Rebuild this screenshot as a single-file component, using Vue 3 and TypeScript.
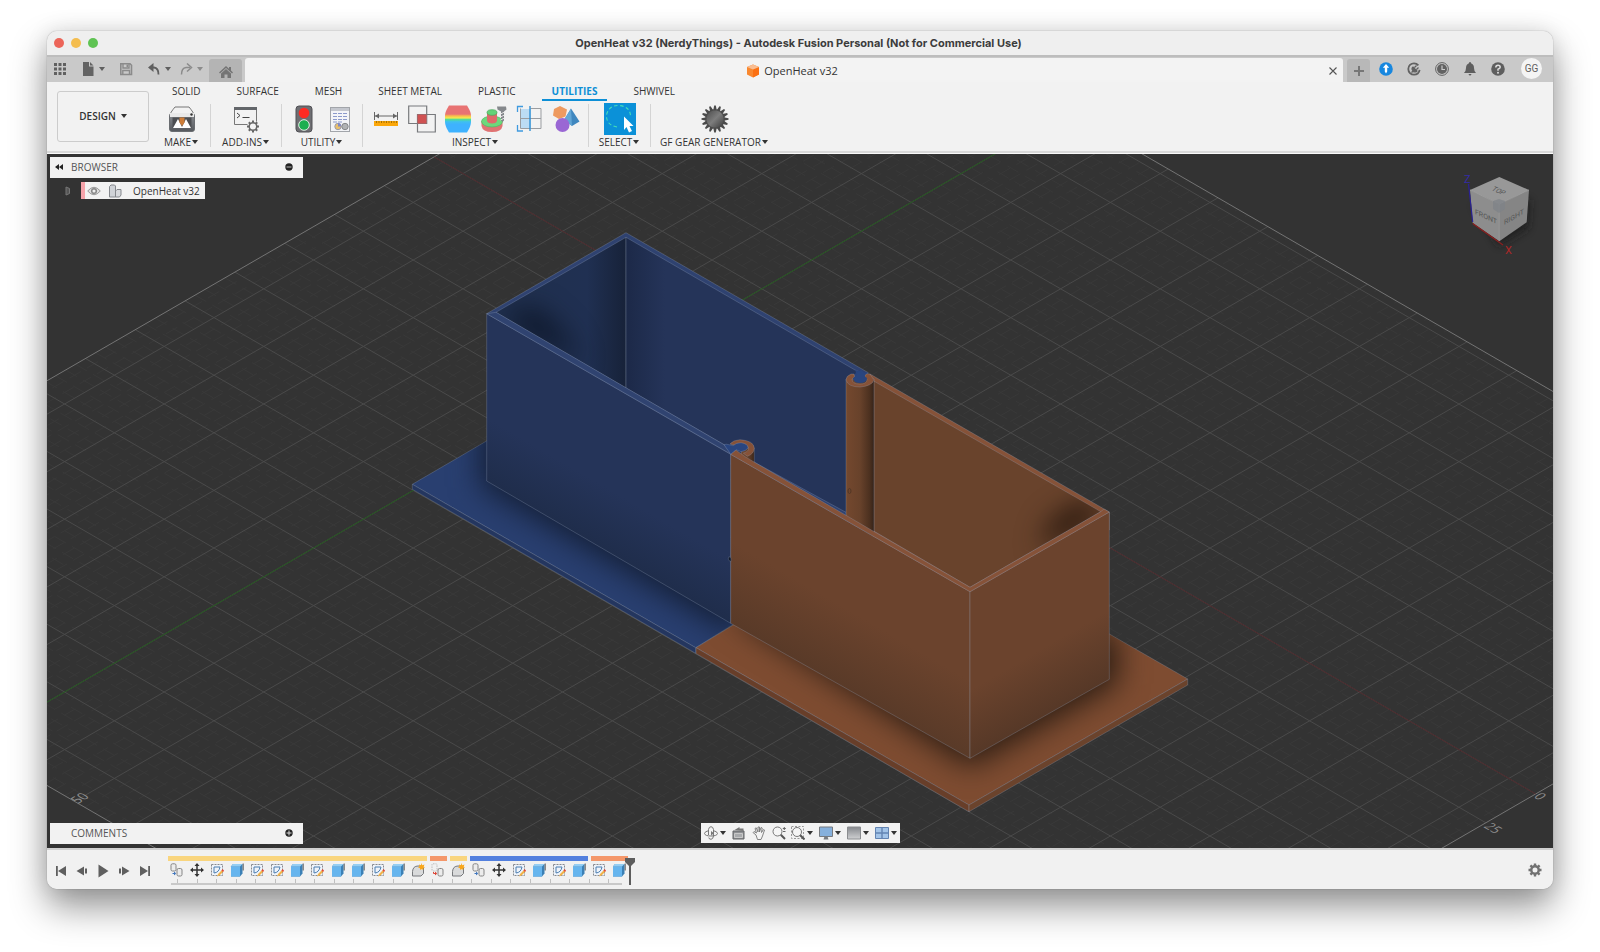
<script setup lang="ts">
import { ref } from 'vue'

interface ToolGroup {
  label: string
  size: string
  icons: { id: string; name: string; active?: boolean }[]
}

const tabs = ['SOLID', 'SURFACE', 'MESH', 'SHEET METAL', 'PLASTIC', 'UTILITIES', 'SHWIVEL']
const activeTab = ref('UTILITIES')

const groups: ToolGroup[] = [
  { label: 'MAKE', size: 'g-make', icons: [{ id: 'i-make', name: '3D print' }] },
  { label: 'ADD-INS', size: 'g-addins', icons: [{ id: 'i-script', name: 'Scripts and add-ins' }] },
  {
    label: 'UTILITY',
    size: 'g-utility',
    icons: [
      { id: 'i-traffic', name: 'Compute all' },
      { id: 'i-sheet', name: 'Parameters' },
    ],
  },
  {
    label: 'INSPECT',
    size: 'g-inspect',
    icons: [
      { id: 'i-measure', name: 'Measure' },
      { id: 'i-interfere', name: 'Interference' },
      { id: 'i-zebra', name: 'Curvature' },
      { id: 'i-section', name: 'Draft analysis' },
      { id: 'i-plane', name: 'Section analysis' },
      { id: 'i-shapes', name: 'Component colors' },
    ],
  },
  { label: 'SELECT', size: 'g-select', icons: [{ id: 'i-select', name: 'Select', active: true }] },
  { label: 'GF GEAR GENERATOR', size: 'g-gear', icons: [{ id: 'i-gear', name: 'Gear generator' }] },
]

const spans = [
  { cls: 'yellow s13' },
  { cls: 'orange s1' },
  { cls: 'yellow s1' },
  { cls: 'blue s6' },
  { cls: 'orange s2' },
]

const history = [
  'joint', 'move', 'sketch', 'extrude', 'sketch', 'sketch', 'extrude', 'sketch', 'extrude', 'extrude',
  'sketch', 'extrude', 'fillet', 'jointr', 'fillet', 'joint', 'move', 'sketch', 'extrude', 'sketch',
  'extrude', 'sketch', 'extrude',
]

const playback = [
  { id: 't-first', name: 'Go to beginning' },
  { id: 't-back', name: 'Step back' },
  { id: 't-play', name: 'Play' },
  { id: 't-fwd', name: 'Step forward' },
  { id: 't-last', name: 'Go to end' },
]

const navTools = [
  { id: 'n-orbit', name: 'Orbit', caret: true },
  { id: 'n-look', name: 'Look at', caret: false },
  { id: 'n-pan', name: 'Pan', caret: false },
  { id: 'n-zoom', name: 'Zoom', caret: false },
  { id: 'n-fit', name: 'Fit', caret: true },
  { id: 'n-display', name: 'Display settings', caret: true },
  { id: 'n-grid', name: 'Grid and snaps', caret: true },
  { id: 'n-views', name: 'Viewports', caret: true },
]

const origin = { x: 712, y: 317.6 }
const step = { x: 49.8, y: 28.8 }
const span = { i0: -5.58, i1: 16.54, j0: -14.8, j1: 7.16 }

const at = (i: number, j: number): string =>
  `${(origin.x + (i + j) * step.x).toFixed(1)} ${(origin.y + (i - j) * step.y).toFixed(1)}`

function gridPath(div: number): string {
  let d = ''
  for (let n = Math.ceil(span.i0 * div); n <= span.i1 * div; n++) {
    if (div > 1 && n % div === 0) continue
    d += `M${at(n / div, span.j0)}L${at(n / div, span.j1)}`
  }
  for (let n = Math.ceil(span.j0 * div); n <= span.j1 * div; n++) {
    if (div > 1 && n % div === 0) continue
    d += `M${at(span.i0, n / div)}L${at(span.i1, n / div)}`
  }
  return d
}

const majorGrid = gridPath(1)
const minorGrid = gridPath(5)
const border = `M${at(span.i0, span.j0)}L${at(span.i0, span.j1)}L${at(span.i1, span.j1)}L${at(span.i1, span.j0)}Z`
const xAxis = `M${at(span.i0, 0)}L${at(span.i1, 0)}`
const yAxis = `M${at(0, span.j0)}L${at(0, span.j1)}`

const teeth = Array.from({ length: 16 }, (_, k) => k * 22.5)
const cogTeeth = Array.from({ length: 8 }, (_, k) => k * 45)
</script>

<template>
  <div class="desktop">
    <svg class="sprites" aria-hidden="true">
      <defs>
        <linearGradient id="gPrinter" x1="0" y1="0" x2="0" y2="1"><stop offset="0" stop-color="#8b8e93" /><stop offset="1" stop-color="#55585d" /></linearGradient>
        <linearGradient id="gHeat" x1="0" y1="0" x2="0" y2="1">
          <stop offset=".32" stop-color="#e87373" /><stop offset=".38" stop-color="#f8b84e" /><stop offset=".46" stop-color="#f5ea4c" />
          <stop offset=".52" stop-color="#4fdc9b" /><stop offset=".6" stop-color="#3fc0f0" /><stop offset=".7" stop-color="#3eb2ff" />
        </linearGradient>
        <linearGradient id="gGear" x1="0" y1="0" x2="1" y2="1"><stop offset="0" stop-color="#444" /><stop offset=".5" stop-color="#7d7d7d" /><stop offset="1" stop-color="#333" /></linearGradient>
        <linearGradient id="gGrey" x1="0" y1="0" x2="0" y2="1"><stop offset="0" stop-color="#85888d" /><stop offset="1" stop-color="#cfd0d2" /></linearGradient>
        <symbol id="i-make" viewBox="0 0 28 28">
          <path d="M2 10Q2 8 7 2h14q5 6 5 8z" fill="#f2f2f2" stroke="#777" />
          <rect x="1.500" y="8.500" width="25" height="18" rx="2.500" fill="url(#gPrinter)" stroke="#6a6d71" />
          <path d="M2 8h24v4H2z" fill="#e9e9e9" /><circle cx="23.500" cy="9.500" r="1.200" fill="#333" />
          <rect x="4.500" y="12.500" width="19" height="10.500" fill="#4c4e52" />
          <path d="M5 23 10 14l4 8 4-8 5 9z" fill="#fff" /><path d="M11.500 12.500h5v5L14 21l-2.500-3.500z" fill="#ce7d38" />
        </symbol>
        <symbol id="i-script" viewBox="0 0 28 28">
          <path d="M2.500 2.500h22v14M2.500 2.500v17h13" fill="none" stroke="#777" /><path d="M2 2h23v3H2z" fill="#63666a" />
          <path d="m5 8 3 2.500-3 2.500M10.500 12.500h7" fill="none" stroke="#444" />
          <circle cx="21" cy="21.500" r="3.800" fill="#f4f4f4" stroke="#666" stroke-width="1.500" />
          <path d="M21 17.500v-2M21 27.500v-2M25 21.500h2M15 21.500h2M18.200 18.700l-1.400-1.400M25.200 25.700l-1.400-1.400M23.800 18.700l1.400-1.400M16.800 25.700l1.400-1.400" stroke="#666" stroke-width="2" />
        </symbol>
        <symbol id="i-traffic" viewBox="0 0 28 28">
          <rect x="6" y="1" width="16" height="26" rx="3" fill="#6e6e72" stroke="#505054" />
          <circle cx="14" cy="8" r="5.300" fill="#ff2a22" /><circle cx="14" cy="20" r="5.300" fill="#1cae50" stroke="#e6efe8" />
        </symbol>
        <symbol id="i-sheet" viewBox="0 0 28 28">
          <rect x="4.500" y="2.500" width="19" height="24" fill="#f3f4f7" stroke="#a2a5aa" /><path d="M5 3h18v3H5z" fill="#c4c7ce" />
          <path d="M7 8.500h4m1 0h4m1 0h4M7 11.500h4m1 0h4m1 0h4M7 14.500h4m1 0h4m1 0h4M7 17h4m1 0h4" stroke="#8b99cb" stroke-width="1.200" />
          <circle cx="12" cy="21.500" r="3.200" fill="#e9c06c" stroke="#9a9cae" /><path d="M12 21.500V18a3.300 3.300 0 0 1 3 3.500z" fill="#7f88c6" />
          <circle cx="19" cy="21.500" r="3.200" fill="#b0b2b4" stroke="#85878a" />
        </symbol>
        <symbol id="i-measure" viewBox="0 0 28 28">
          <path d="M2.500 7v8M25.500 7v8M3 11h22" stroke="#666" /><path d="m3 11 4-2.500v5zM25 11l-4-2.500v5z" fill="#666" />
          <path d="M2 16h24v5H2z" fill="#fba70a" /><path d="M4.500 16v2M7 16v2M9.500 16v2M12 16v2M14.500 16v2M17 16v2M19.500 16v2M22 16v2M24.500 16v2" stroke="#a87100" />
        </symbol>
        <symbol id="i-interfere" viewBox="0 0 28 28">
          <path d="M.7 1h18v17.500H.7zM9.500 9.500h17.800v17.500H9.500z" fill="none" stroke="#77797c" stroke-width="1.200" /><path d="M9.500 9.500h9v9h-9z" fill="#d05252" />
        </symbol>
        <symbol id="i-zebra" viewBox="0 0 28 28"><path d="M5 .5h18Q27 7 27 10v7q0 4-4 10.500H5Q1 21 1 17v-7Q1 7 5 .5z" fill="url(#gHeat)" /></symbol>
        <symbol id="i-section" viewBox="0 0 28 28">
          <path d="M1.500 16v5q1 6 10.500 6t10.500-6v-5z" fill="#e07373" /><ellipse cx="12" cy="16.500" rx="10.500" ry="5.500" fill="#6cd97c" stroke="#55b466" stroke-width=".7" />
          <path d="M7 8v8q1 2.500 5 2.500t5-2.500V8z" fill="#df6a6a" /><ellipse cx="12" cy="7.500" rx="5" ry="2.800" fill="#63d377" stroke="#4aa65c" stroke-width=".7" />
          <path d="M17 1.500h9l.5 3-2.500 2v9l-1.500 1.500-1.500-1.500v-9l-3.500-2z" fill="#85888c" /><path d="m20.500 9 4-2m-4 5 4-2m-4 5 4-2" stroke="#e3e3e3" />
        </symbol>
        <symbol id="i-plane" viewBox="0 0 28 28">
          <path d="M4 4h11v19H4z" fill="#bcdcf4" /><path d="M14.500 3.500h10.500v20H14.500M4 13.500h21M4.500 3.500v20h10" fill="none" stroke="#9a9da1" />
          <path d="M14 1v25" stroke="#2589d0" stroke-width="1.300" /><path d="M7 1.500H1.500V7M1.500 20v6H7" fill="none" stroke="#3f9adf" stroke-width="1.300" />
        </symbol>
        <symbol id="i-shapes" viewBox="0 0 28 28">
          <path d="m8 1 7 3.500-1.500 7L7 14 1 10.500 2 4z" fill="#ee9a5f" /><path d="M19 3.500 27.500 16.500 20 21l-8-6z" fill="#3f87bf" /><path d="m19 3.500 1 17.500-8-6z" fill="#62a6d6" /><circle cx="10.500" cy="20" r="7" fill="#9a67d4" />
        </symbol>
        <symbol id="i-select" viewBox="0 0 32 32">
          <path d="M13 24Q2 22 2.500 12 5 2 15 2.500q12 1 11.500 12" fill="none" stroke="#46dfb6" stroke-width="1.100" stroke-dasharray="3.500 2.500" />
          <path d="M20 13.500 29.500 23h-4l2.500 5-3 1.500L22.500 24 20 27z" fill="#fff" />
        </symbol>
        <symbol id="i-gear" viewBox="0 0 28 28">
          <circle cx="14" cy="14" r="10" fill="url(#gGear)" />
          <path v-for="a in teeth" :key="a" d="m12.200 5.500 1-5h1.600l1 5z" fill="#4a4a4a" :transform="`rotate(${a} 14 14)`" />
        </symbol>

        <symbol id="b-apps" viewBox="0 0 14 14"><path d="M1 1h3v3H1zM5.500 1h3v3h-3zM10 1h3v3h-3zM1 5.500h3v3H1zM5.500 5.500h3v3h-3zM10 5.500h3v3h-3zM1 10h3v3H1zM5.500 10h3v3h-3zM10 10h3v3h-3z" fill="#606060" /></symbol>
        <symbol id="b-file" viewBox="0 0 14 14"><path d="M2 0h6v4.500h4.500V14H2zM9 0l3.500 3.500H9z" fill="#636363" /></symbol>
        <symbol id="b-save" viewBox="0 0 14 14"><path d="M1.800 1.800h9.200l1.500 1.500v9.200H1.800z" fill="none" stroke="#8b8b8b" stroke-width="1.600" /><path d="M4 2v4h6V2M3.800 12.500V8.500h6.700v4" fill="none" stroke="#8b8b8b" stroke-width="1.400" /><path d="M7.500 2.500h1.500V5H7.500z" fill="#8b8b8b" /></symbol>
        <symbol id="b-undo" viewBox="0 0 14 14"><path d="M4 5.500h3q4.500.5 4.500 7" fill="none" stroke="currentColor" stroke-width="1.800" /><path d="M6.500 1v9L1 5.500z" fill="currentColor" /></symbol>
        <symbol id="b-redo" viewBox="0 0 14 14"><path d="M11 5.500H7q-4.500.5-4.500 7" fill="none" stroke="currentColor" stroke-width="1.500" /><path d="m8 1.500 4.500 4L8 9.500" fill="none" stroke="currentColor" stroke-width="1.500" /></symbol>
        <symbol id="b-home" viewBox="0 0 14 14"><path d="M7 1 0 7.500l1 1L7 3l6 5.500 1-1-2-2V2h-2v1.700z" fill="#747474" /><path d="M2 8.500 7 4l5 4.500V13H8.500V9.500h-3V13H2z" fill="#747474" /></symbol>
        <symbol id="b-doc" viewBox="0 0 14 14"><path d="m7 .5 6 2.500v7.500L7 13.500l-6-3V3z" fill="#f9882f" /><path d="M7 5.500 13 3v7.500l-6 3z" fill="#fb7013" /><path d="m1 3 6 2.500L13 3 7 .5z" fill="#f9bd92" /></symbol>
        <symbol id="b-up" viewBox="0 0 14 14"><circle cx="7" cy="7" r="6.800" fill="#1787df" /><path d="M7 2 3.800 5.800h2V9.500l1.200 2 1.200-2V5.800h2z" fill="#fff" /></symbol>
        <symbol id="b-job" viewBox="0 0 14 14"><circle cx="7" cy="7" r="5.700" fill="none" stroke="#626262" stroke-width="1.800" stroke-dasharray="30 6" stroke-dashoffset="-1" /><path d="M4.500 10.500 6 9Q4 6.500 6 5l4 4q-1.500 1.700-4 .5zM7.500 5.500l2-2M9.500 7.500l2-2" fill="#626262" stroke="#626262" stroke-width="1.200" /></symbol>
        <symbol id="b-clock" viewBox="0 0 14 14"><circle cx="7" cy="7" r="6.400" fill="none" stroke="#626262" /><circle cx="7" cy="7" r="5" fill="#626262" /><path d="M7 3.500V7.500h3" fill="none" stroke="#ccc" stroke-width="1.200" /></symbol>
        <symbol id="b-bell" viewBox="0 0 14 14"><path d="M7 0q1 0 1 1.300 3 1 3 4.700 0 3 2 5H1q2-2 2-5 0-3.700 3-4.700Q6 0 7 0zM5.500 12h3Q8 13.500 7 13.500T5.500 12z" fill="#5e5e5e" /></symbol>
        <symbol id="b-help" viewBox="0 0 14 14"><circle cx="7" cy="7" r="6.800" fill="#5e5e5e" /><path d="M4.800 5.500Q4.800 3.200 7 3.200t2.200 2.100Q9.200 6.500 7 7.200v1.500" fill="none" stroke="#ddd" stroke-width="1.500" /><circle cx="7" cy="10.700" r="1" fill="#ddd" /></symbol>

        <symbol id="c-joint" viewBox="0 0 14 14"><rect x="1" y=".8" width="5" height="7.200" rx="1.500" fill="#ececec" stroke="#858585" /><rect x="7" y="5.500" width="5" height="7.500" rx="1.500" fill="#ececec" stroke="#858585" /><path d="M2.500 10.500H5M4 9l1.800 1.500L4 12" fill="none" stroke="#3f75bd" /></symbol>
        <symbol id="c-jointr" viewBox="0 0 14 14"><rect x="1" y=".8" width="5" height="7.200" rx="1" fill="none" stroke="#bbb" stroke-dasharray="1.500 1" /><rect x="7" y="5.500" width="5" height="7.500" rx="1.500" fill="#ececec" stroke="#858585" /><path d="M2.500 9v1.500H5M4 9l1.800 1.500L4 12" fill="none" stroke="#db4334" /></symbol>
        <symbol id="c-move" viewBox="0 0 14 14"><path d="M7 2v10M2 7h10" stroke="#333" stroke-width="1.500" /><path d="M7 0 4.500 3h5zM7 14l-2.500-3h5zM0 7l3-2.500v5zM14 7l-3-2.500v5z" fill="#333" /></symbol>
        <symbol id="c-sketch" viewBox="0 0 14 14"><path d="M1.500 1.500h11v11h-11z" fill="#eef3fa" stroke="#878a90" stroke-dasharray="2 1" /><path d="M4 4v6q5-.5 6-6z" fill="none" stroke="#4c7eb0" /><path d="m8 11 4-4 1.500 1.500-4 4-2.500 1z" fill="#f1b34a" /><path d="m11.500 7.500 1-1.500L14 7.500 13 9z" fill="#e0483b" /></symbol>
        <symbol id="c-extrude" viewBox="0 0 14 14"><path d="m1 3.500 2-2.500h9.500v9.500L10 13.500H1z" fill="#3b80b5" /><path d="M1 3.500h9v10H1z" fill="#66b5ee" /><path d="m1 3.500 2-2.500h9.500L10 3.500z" fill="#94cef4" /><path d="M13.200.5v7" stroke="#333" stroke-width=".8" /></symbol>
        <symbol id="c-fillet" viewBox="0 0 14 14"><path d="M1.500 13V8.500Q2 3 7 3h3l2.500 2v5.500L10 13z" fill="#d9dadb" stroke="#77797c" /><path d="m10.500 0 .8 2.300L13.500 1.500l-.8 2 1.300 1-1.800.6.300 1.900-2-1-1.500 1V5.200L7 4.500l1.500-1L8 1.500l2 .8z" fill="#f8a61a" /></symbol>

        <symbol id="t-first" viewBox="0 0 14 14"><path d="M2 2h1.800v10H2zM12 2v10L4 7z" fill="#5f5f5f" /></symbol>
        <symbol id="t-back" viewBox="0 0 14 14"><path d="M9 2.500v9L1.500 7zM10 4.500h2v5h-2z" fill="#5f5f5f" /></symbol>
        <symbol id="t-play" viewBox="0 0 14 14"><path d="M2.500.5v13L12.500 7z" fill="#5f5f5f" /></symbol>
        <symbol id="t-fwd" viewBox="0 0 14 14"><path d="M5 2.500v9L12.500 7zM2 4.500h2v5H2z" fill="#5f5f5f" /></symbol>
        <symbol id="t-last" viewBox="0 0 14 14"><path d="M10.200 2H12v10h-1.800zM2 2v10l8-5z" fill="#5f5f5f" /></symbol>

        <symbol id="n-orbit" viewBox="0 0 14 14"><path d="M5 4.500Q.5 5.500.5 7.500 1 10 7 10t6.500-2.500Q13.500 5.500 9 4.500" fill="none" stroke="#777" /><path d="M4.500 9V3.500Q5 .7 7 .7T9.500 3.500V10Q9 13.300 7 13.300T4.800 11.500" fill="none" stroke="#777" /><path d="m7 5 3 2.200L7 9.500z" fill="#777" /></symbol>
        <symbol id="n-look" viewBox="0 0 14 14"><path d="M1 5h11v8H1z" fill="#8f9194" stroke="#626467" /><path d="m2.500 4 5-3v1.500h4V5" fill="#777" /><path d="M2.500 7.500h8v4h-8z" fill="#a9abad" stroke="#c8c8c8" /></symbol>
        <symbol id="n-pan" viewBox="0 0 14 14"><path d="M4 9 1 6.500l1-1L4.500 7 3 2.500l1.200-.7L6 6V1h1.500v5L9 1.500l1.200.5L9.500 6.500l2-3 1 .5-2 6L9 13.500H5.500z" fill="#f3f3f3" stroke="#777" stroke-width=".9" /></symbol>
        <symbol id="n-zoom" viewBox="0 0 14 14"><circle cx="5.500" cy="5.500" r="4.500" fill="#f5f5f5" stroke="#777" /><path d="m8.800 8.800 4.200 4.200" stroke="#555" stroke-width="2" /><path d="M10.800 2.500h3M12.300 1v3M11 5.500h2.500" stroke="#666" /></symbol>
        <symbol id="n-fit" viewBox="0 0 14 14"><path d="M.5.500h12v12H.5z" fill="none" stroke="#999" stroke-dasharray="2 1.500" /><circle cx="6" cy="6" r="4.500" fill="#f5f5f5" stroke="#777" /><path d="m9.200 9.200 4.300 4.300" stroke="#555" stroke-width="2" /></symbol>
        <symbol id="n-display" viewBox="0 0 14 14"><path d="M.5 1h13v9.500H.5z" fill="#86b0dc" stroke="#777b80" /><path d="M5.500 10.500h3l1 3h-5z" fill="#777b80" /></symbol>
        <symbol id="n-grid" viewBox="0 0 14 14"><path d="M.5 1h13v12H.5z" fill="url(#gGrey)" stroke="#8b8d90" /></symbol>
        <symbol id="n-views" viewBox="0 0 14 14"><path d="M.5 1.500h13v11H.5z" fill="#a3c4e8" stroke="#6384b2" /><path d="M7 1.500v11M.5 7h13" stroke="#6384b2" stroke-width="1.400" /></symbol>
        <symbol id="n-cog" viewBox="0 0 14 14"><circle cx="7" cy="7" r="3.700" fill="none" stroke="#727272" stroke-width="2.400" /><path v-for="a in cogTeeth" :key="a" d="M5.800.5h2.400v2.500H5.800z" fill="#727272" :transform="`rotate(${a} 7 7)`" /></symbol>
        <symbol id="p-back" viewBox="0 0 10 10"><path d="M5 2v6L1 5zM9 2v6L5 5z" fill="#222" /></symbol>
        <symbol id="p-minus" viewBox="0 0 10 10"><circle cx="5" cy="5" r="3.700" fill="#222" /><path d="M2.500 5h5" stroke="#bbb" /></symbol>
        <symbol id="p-plus" viewBox="0 0 10 10"><circle cx="5" cy="5" r="3.700" fill="#222" /><path d="M2.500 5h5M5 2.500v5" stroke="#ddd" /></symbol>
        <symbol id="p-eye" viewBox="0 0 14 14"><path d="M.7 7Q7-.500 13.300 7 7 14.500.7 7z" fill="#dcdcdc" stroke="#999" /><circle cx="7" cy="7" r="2.300" fill="#eee" stroke="#888" stroke-width="1.500" /></symbol>
        <symbol id="p-comp" viewBox="0 0 14 14"><path d="M1.500 2.500 3 1h3.500l1 1v11h-6z" fill="#d0d3d7" stroke="#85888d" /><path d="M7.500 7 9 5.500h4V11l-1.500 2h-4z" fill="#d8dadd" stroke="#85888d" /></symbol>
      </defs>
    </svg>

    <main class="window">
      <header class="titlebar">
        <div class="lights">
          <button class="light red" aria-label="Close window"></button>
          <button class="light amber" aria-label="Minimise window"></button>
          <button class="light green" aria-label="Zoom window"></button>
        </div>
        <h1>OpenHeat v32 (NerdyThings) - Autodesk Fusion Personal (Not for Commercial Use)</h1>
      </header>

      <div class="docbar">
        <div class="quick">
          <button aria-label="Data panel"><svg class="ic"><use href="#b-apps" /></svg></button>
          <button aria-label="File"><svg class="ic"><use href="#b-file" /></svg><i class="caret"></i></button>
          <button aria-label="Save"><svg class="ic"><use href="#b-save" /></svg></button>
          <button aria-label="Undo"><svg class="ic"><use href="#b-undo" /></svg><i class="caret"></i></button>
          <button class="dim" aria-label="Redo"><svg class="ic"><use href="#b-redo" /></svg><i class="caret"></i></button>
        </div>
        <button class="home" aria-label="Home"><svg class="ic"><use href="#b-home" /></svg></button>
        <div class="doctab">
          <span class="docname"><svg class="ic"><use href="#b-doc" /></svg>OpenHeat v32</span>
          <button class="close" aria-label="Close document"><svg viewBox="0 0 8 8"><path d="m.5.500 7 7m0-7-7 7" stroke="#555" stroke-width="1.100" /></svg></button>
        </div>
        <button class="plus" aria-label="New design"><svg viewBox="0 0 12 12"><path d="M6 1v10M1 6h10" stroke="#777" stroke-width="2" /></svg></button>
        <div class="account">
          <button aria-label="Updates"><svg class="ic"><use href="#b-up" /></svg></button>
          <button aria-label="Extensions"><svg class="ic"><use href="#b-job" /></svg></button>
          <button aria-label="Job status"><svg class="ic"><use href="#b-clock" /></svg></button>
          <button aria-label="Notifications"><svg class="ic"><use href="#b-bell" /></svg></button>
          <button aria-label="Help"><svg class="ic"><use href="#b-help" /></svg></button>
        </div>
        <button class="avatar">GG</button>
      </div>

      <div class="ribbon">
        <button class="workspace">DESIGN <i class="caret"></i></button>
        <div class="ribbon-main">
          <nav class="tabs">
            <button v-for="t in tabs" :key="t" :class="{ on: t === activeTab }" @click="activeTab = t">{{ t }}</button>
          </nav>
          <div class="groups">
            <section v-for="g in groups" :key="g.label" class="group" :class="g.size">
              <div class="tools">
                <button v-for="ic in g.icons" :key="ic.id" :class="{ active: ic.active }" :aria-label="ic.name">
                  <svg><use :href="'#' + ic.id" /></svg>
                </button>
              </div>
              <button class="glabel">{{ g.label }}<i class="caret"></i></button>
            </section>
          </div>
        </div>
      </div>

      <div class="canvas">
        <svg class="scene" viewBox="47 154 1506 694" preserveAspectRatio="xMidYMid slice" role="img" aria-label="OpenHeat model">
          <defs>
            <filter id="soft" x="-50%" y="-50%" width="200%" height="200%" color-interpolation-filters="sRGB"><feGaussianBlur stdDeviation="15" /></filter>
            <filter id="soft2" x="-80%" y="-80%" width="260%" height="260%" color-interpolation-filters="sRGB"><feGaussianBlur stdDeviation="14" /></filter>
            <linearGradient id="post" x1="0" x2="1"><stop offset="0" stop-color="#74482e" /><stop offset=".5" stop-color="#68422b" /><stop offset=".85" stop-color="#4b301f" /><stop offset="1" stop-color="#35231a" /></linearGradient>
            <linearGradient id="blueFront" gradientUnits="userSpaceOnUse" x1="600" y1="548" x2="628" y2="500"><stop offset="0" stop-color="#1f2d4b" /><stop offset="1" stop-color="#253459" /></linearGradient>
            <linearGradient id="brownFront" gradientUnits="userSpaceOnUse" x1="850" y1="691" x2="885" y2="631"><stop offset="0" stop-color="#593a28" /><stop offset="1" stop-color="#6b432d" /></linearGradient>
            <linearGradient id="brownSide" gradientUnits="userSpaceOnUse" x1="1040" y1="719" x2="1010" y2="667"><stop offset="0" stop-color="#563827" /><stop offset="1" stop-color="#6b432d" /></linearGradient>
            <linearGradient id="blueLeft" x1="0" x2="1"><stop offset=".2" stop-color="#20304f" /><stop offset=".7" stop-color="#203052" /><stop offset="1" stop-color="#172239" /></linearGradient>
            <linearGradient id="blueBack" gradientUnits="userSpaceOnUse" x1="626" x2="665" y1="0" y2="0"><stop offset="0" stop-color="#1c2948" /><stop offset="1" stop-color="#253459" /></linearGradient>
            <clipPath id="cPlateBlue"><path d="M412.300 484.300 486.700 441 740 441V620L734 624.300 695.700 647.700z" /></clipPath>
            <clipPath id="cPlateBrown"><path d="M696 647.700 734.300 624.300 1109.300 634 1187.700 679 969 805z" /></clipPath>
            <clipPath id="cInBlue"><path d="M496 312.300 626 237.300V388z" /></clipPath>
            <clipPath id="cInBrown"><path d="M873.700 381 1100.700 511.700 970 587.300 873.700 531z" /></clipPath>
          </defs>
          <path :d="minorGrid" class="minor" />
          <path :d="majorGrid" class="major" />
          <path :d="border" class="border" />
          <path :d="xAxis" class="xaxis" />
          <path :d="yAxis" class="yaxis" />
          <g class="scale">
            <text transform="translate(78 804) rotate(-30) skewX(30)">50</text>
            <text transform="translate(1483 827) rotate(30) skewX(-30)">25</text>
            <text transform="translate(1533 797) rotate(30) skewX(-30)">0</text>
          </g>

          <g stroke-linejoin="round" class="edges">
            <path d="M412.300 484.300 486.700 441 740 560V620L695.700 647.700z" fill="#293f70" />
            <g clip-path="url(#cPlateBlue)">
              <path d="M480 425V486L740 638V560L500 420z" fill="#141f36" stroke="none" filter="url(#soft)" />
            </g>
            <path d="M412.300 484.300 695.700 647.700v5.600L412.300 489.300z" fill="#24365f" />
            <path d="M696 647.700 734.300 624.300 1109.300 634 1187.700 679 969 805z" fill="#7e4c31" />
            <g clip-path="url(#cPlateBrown)">
              <path d="M725 610 970 767 1118 683V634L970 620z" fill="#2c1d13" stroke="none" filter="url(#soft)" />
            </g>
            <path d="M696 647.700 969 805v6.700L696 653.500z" fill="#683e29" />
            <path d="M969 805 1187.700 679v6L969 811.700z" fill="#6b432c" />

            <path d="M486.700 313.700 626 232.700 868.300 372.700 860 380V540L740 470z" fill="#2f4270" />
            <path d="M496 312.300 626 237.300V388z" fill="url(#blueLeft)" />
            <g clip-path="url(#cInBlue)">
              <path d="M500 316 580 362 562 334 535 309z" fill="#0a1222" stroke="none" filter="url(#soft2)" />
            </g>
            <path d="M626 237.300 855 370 860 372V520L754 462 626 388z" fill="url(#blueBack)" />
            <path d="M855 370q3 4-4 6l8 5 9-8z" fill="#29447e" stroke="none" />

            <path d="M870 374 1109.300 512V530L970 600 873 540z" fill="#865238" />
            <path d="M873.700 381 1100.700 511.700 970 587.300 873.700 531z" fill="#69432c" />
            <g clip-path="url(#cInBrown)">
              <path d="M1104 512 1040 549 1052 522 1085 502z" fill="#150b05" stroke="none" filter="url(#soft2)" />
            </g>
            <path d="M846 379v140L874 534V379z" fill="url(#post)" />
            <path d="M851 374Q846 376 846 380q2 7 14 7 12-1 14-7L870 374q-3-1-5 1-1 3 2 4 0 5-7 5-8 0-8-5 4-2 2-5z" fill="#865238" />
            <path d="M856 373q3 2-3 5 0 5 7 5t7-5q-4-2-1-4l-5-4z" fill="#29457f" stroke="none" />
            <ellipse cx="849.500" cy="491" rx="1.500" ry="2.500" fill="none" stroke="#523625" />

            <path d="M486.700 313.700 730.700 454.300V623.300L486.700 481z" fill="url(#blueFront)" />
            <path d="M486.700 313.700 496 312.300 724 444.700 732 454.800z" fill="#304370" />
            <path d="M742 448h12.300v20L740 460z" fill="url(#post)" />
            <path d="M730 444q3-4 10-4.300 14 1 14.300 8.500-.5 6-7 8l-4-3q6-2 5-5-1-4-8-4.500-3 0-6 1.500z" fill="#865238" />
            <path d="M724 444.700q2-1 5 0l4 1q3-3 8-3 7 1 7 5-1 3-7 4l-5-2-5 5z" fill="#29457f" />
            <path d="M730.700 454.300 970 591.700V758.300L730.700 623.300z" fill="url(#brownFront)" />
            <path d="M970 591.700 1109.300 512V679.300L970 758.300z" fill="url(#brownSide)" />
            <path d="M730.700 454.300 736 450 745 456.700 970 587.300 1100.700 511.700 1104 509 1109.300 512 970 591.700z" fill="#865238" />
            <path d="M729 556.500q3 1 2 5-4-1-2-5z" fill="#10192b" stroke="#101521" />
          </g>
        </svg>

        <div class="panel browser">
          <button class="fold" aria-label="Collapse browser"><svg><use href="#p-back" /></svg></button>
          <span>BROWSER</span>
          <button class="dot" aria-label="Minimise browser"><svg><use href="#p-minus" /></svg></button>
        </div>
        <div class="tree">
          <button class="expander" aria-label="Expand OpenHeat v32"><svg viewBox="0 0 6 10"><path d="M1 1 4.500 2.500v5L1 9z" fill="#555" stroke="#777" /></svg></button>
          <div class="node">
            <button aria-label="Toggle visibility"><svg class="ic"><use href="#p-eye" /></svg></button>
            <svg class="ic"><use href="#p-comp" /></svg>
            <span>OpenHeat v32</span>
          </div>
        </div>
        <div class="panel comments">
          <span>COMMENTS</span>
          <button class="dot" aria-label="Expand comments"><svg><use href="#p-plus" /></svg></button>
        </div>

        <svg class="cube" viewBox="1460 168 80 96" role="img" aria-label="View cube">
          <defs><filter id="cs" x="-50%" y="-50%" width="200%" height="200%"><feGaussianBlur stdDeviation="4" /></filter></defs>
          <path d="M1474 205 1499 246 1528 228 1530 200z" fill="#1f1f1f" filter="url(#cs)" opacity=".8" />
          <path d="M1499.300 177 1529 190 1499.300 204 1470 190z" fill="#989898" />
          <path d="M1470 190 1499.300 204V241.300L1472.700 223z" fill="#8d8d8d" />
          <path d="M1529 190 1499.300 204V241.300L1526.700 222.300z" fill="#858585" />
          <path d="M1470 190 1499.300 204 1529 190M1499.300 204V241" fill="none" stroke="#a4a4a4" stroke-width=".8" />
          <path d="m1493 201 6-2 6 2v8l-6 4-6-4z" fill="#7e8287" opacity=".7" />
          <path d="M1468.500 184 1472.700 222" stroke="#2a2196" stroke-width="1.200" />
          <path d="M1472.700 223.500 1503 245" stroke="#8e1f1f" stroke-width="1.200" />
          <g class="facetext">
            <text transform="translate(1491 190) rotate(24) skewX(-20)">TOP</text>
            <text transform="translate(1475 214) skewY(25)">FRONT</text>
            <text transform="translate(1504 225) skewY(-30)">RIGHT</text>
          </g>
          <text x="1464" y="183" class="z">Z</text>
          <text x="1505" y="254" class="x">X</text>
        </svg>

        <div class="navbar">
          <button v-for="n in navTools" :key="n.id" :aria-label="n.name">
            <svg class="ic"><use :href="'#' + n.id" /></svg><i v-if="n.caret" class="caret"></i>
          </button>
        </div>
      </div>

      <footer class="timeline">
        <div class="playback">
          <button v-for="p in playback" :key="p.id" :aria-label="p.name"><svg class="ic"><use :href="'#' + p.id" /></svg></button>
        </div>
        <div class="track">
          <div class="bars"><span v-for="(s, k) in spans" :key="k" :class="s.cls"></span></div>
          <div class="features">
            <button v-for="(h, k) in history" :key="k" :aria-label="h"><svg class="ic"><use :href="'#c-' + h" /></svg></button>
          </div>
          <div class="ticks"><span v-for="(h, k) in history" :key="k"></span></div>
          <svg class="marker" viewBox="0 0 10 27"><path d="M0 0h10v4L6 8v19H4V8L0 4z" fill="#5d5d5d" /></svg>
        </div>
        <button class="settings" aria-label="Timeline settings"><svg class="ic"><use href="#n-cog" /></svg></button>
      </footer>
    </main>
  </div>
</template>

<style>
body {
  background: #fff;
}
</style>

<style scoped>
* {
  box-sizing: border-box;
}
.desktop {
  min-height: 100vh;
  padding: 31px 47px 63px;
  display: flex;
  background: #fff;
  font-family: 'Open Sans', 'Noto Sans', sans-serif;
  font-size: 11px;
  line-height: 14px;
  color: #333;
}
.sprites {
  position: absolute;
  width: 0;
  height: 0;
}
button {
  border: 0;
  margin: 0;
  padding: 0;
  background: none;
  font: inherit;
  color: inherit;
  display: flex;
  align-items: center;
  justify-content: center;
}
svg {
  display: block;
  flex: none;
}
.ic {
  width: 14px;
  height: 14px;
}
.caret {
  width: 0;
  height: 0;
  border: 3px solid transparent;
  border-top: 4px solid currentColor;
  border-bottom: 0;
  flex: none;
}
.window {
  flex: 1;
  min-width: 0;
  display: flex;
  flex-direction: column;
  border-radius: 10px;
  overflow: hidden;
  background: #f1f1f1;
  box-shadow: 0 0 1px rgba(0, 0, 0, 0.5), 0 18px 36px rgba(0, 0, 0, 0.42), 0 0 22px rgba(0, 0, 0, 0.1);
}
.titlebar {
  height: 24px;
  display: flex;
  align-items: center;
  justify-content: center;
  position: relative;
  background: #efefef;
}
.titlebar h1 {
  margin: 0;
  padding-right: 3px;
  font: 700 11px/16px Inter, sans-serif;
  color: #3c3c3c;
}
.lights {
  position: absolute;
  left: 7px;
  display: flex;
  gap: 7px;
}
.light {
  width: 10px;
  height: 10px;
  border-radius: 50%;
}
.red { background: #ec6559; }
.amber { background: #f4bd4f; }
.green { background: #5fc353; }

.docbar {
  height: 27px;
  display: flex;
  align-items: flex-end;
  background: #c9c9c9;
  border-top: 2px solid #bdbdbd;
  color: #5f5f5f;
}
.quick {
  width: 162px;
  height: 25px;
  padding: 0 0 1px 6px;
  display: flex;
  align-items: center;
  gap: 14px;
}
.quick button {
  gap: 4px;
}
.quick .dim {
  color: #8b8b8b;
  margin-left: -6px;
}
.home {
  width: 33px;
  height: 23px;
  border-radius: 3px 3px 0 0;
  background: #b4b4b4;
  margin-right: 3px;
  padding-top: 2px;
}
.doctab {
  flex: 1;
  height: 24px;
  border-radius: 3px 3px 0 0;
  background: #f3f3f3;
  display: flex;
  align-items: center;
  padding: 1px 6px 0 10px;
  color: #333;
}
.docname {
  flex: 1;
  display: flex;
  align-items: center;
  justify-content: center;
  gap: 4px;
}
.close svg {
  width: 8px;
  height: 8px;
}
.plus {
  width: 23px;
  height: 23px;
  margin-left: 4px;
  border-radius: 3px 3px 0 0;
  background: #b8b8b8;
}
.plus svg {
  width: 12px;
  height: 12px;
}
.account {
  display: flex;
  align-items: center;
  gap: 14px;
  height: 25px;
  padding: 0 16px 2px 9px;
}
.avatar {
  width: 21px;
  height: 21px;
  margin: 0 11px 3px 0;
  border-radius: 50%;
  background: #f4f4f4;
  font: 10px/14px Roboto, sans-serif;
}

.ribbon {
  height: 72px;
  display: flex;
  background: #f2f2f2;
  border-bottom: 1px solid #fafafa;
  box-shadow: inset 0 -2px 0 #d9d9d9;
}
.workspace {
  width: 92px;
  height: 51px;
  margin: 9px 3px 0 10px;
  padding-bottom: 2px;
  border: 1px solid #ccc;
  border-radius: 3px;
  font-size: 10px;
  font-weight: 600;
  gap: 5px;
}
.ribbon-main {
  flex: 1;
}
.tabs {
  display: flex;
  gap: 16px;
  padding-left: 10px;
  font-size: 10px;
}
.tabs button {
  height: 19px;
  padding: 0 10px;
  border-bottom: 2px solid transparent;
}
.tabs .on {
  color: #0d8fd6;
  font-weight: 700;
  border-color: #0d8fd6;
}
.groups {
  display: flex;
}
.group {
  height: 46px;
  position: relative;
}
.group + .group::before {
  content: '';
  position: absolute;
  left: 0;
  top: 3px;
  bottom: 0;
  border-left: 1px solid #d4d4d4;
}
.g-make { width: 58px; }
.g-addins { width: 71px; }
.g-utility { width: 81px; }
.g-inspect { width: 226px; }
.g-select { width: 62px; }
.g-gear { width: 128px; }
.tools {
  height: 34px;
  padding: 2px 0 0 1px;
  display: flex;
  align-items: center;
  justify-content: center;
  gap: 8px;
}
.tools svg {
  width: 28px;
  height: 28px;
}
.tools .active {
  background: #0b91d8;
}
.tools .active svg {
  width: 32px;
  height: 32px;
}
.glabel {
  width: 100%;
  height: 14px;
  font-size: 10px;
  gap: 1px;
  white-space: nowrap;
}

.canvas {
  flex: 1;
  min-height: 0;
  position: relative;
  background: #333;
  overflow: hidden;
}
.scene {
  position: absolute;
  inset: 0;
  width: 100%;
  height: 100%;
}
.scene > path {
  fill: none;
}
.minor {
  stroke: #393939;
  stroke-width: 1;
  stroke-dasharray: 13 7;
}
.major {
  stroke: #4a4a4a;
}
.border {
  stroke: #747474;
}
.xaxis {
  stroke: #4e292c;
}
.yaxis {
  stroke: #24581f;
}
.scale text {
  font: 12px 'Open Sans', sans-serif;
  fill: #8f8f8f;
}
.edges > path {
  stroke: rgba(150, 165, 190, 0.28);
  stroke-width: 1;
}
.edges > path[stroke='none'] {
  stroke: none;
}
.panel {
  position: absolute;
  left: 3px;
  width: 253px;
  height: 21px;
  background: #f2f2f2;
  display: flex;
  align-items: center;
  padding: 0 9px 1px 4px;
  font-size: 10px;
  color: #555;
}
.panel span {
  flex: 1;
}
.panel svg {
  width: 10px;
  height: 10px;
}
.browser {
  top: 3px;
}
.browser span {
  padding-left: 7px;
}
.comments {
  bottom: 4px;
}
.comments span {
  padding-left: 17px;
}
.tree {
  position: absolute;
  left: 18px;
  top: 28px;
  display: flex;
  align-items: center;
}
.expander svg {
  width: 6px;
  height: 10px;
}
.node {
  margin-left: 10px;
  height: 17px;
  padding: 0 5px 0 2px;
  border-left: 4px solid #f5a3aa;
  background: #f2f2f2;
  display: flex;
  align-items: center;
  gap: 7px;
  font-size: 10px;
}
.node span {
  padding-left: 4px;
}
.cube {
  position: absolute;
  top: 14px;
  right: 13px;
  width: 80px;
  height: 96px;
}
.facetext text {
  font: 7px Roboto, sans-serif;
  fill: #555;
}
.z,
.x {
  font: 11px Roboto, sans-serif;
}
.z { fill: #342ba6; }
.x { fill: #ab2828; }
.navbar {
  position: absolute;
  left: 50%;
  bottom: 5px;
  margin-left: -99px;
  width: 199px;
  height: 20px;
  padding: 0 3px;
  background: #f2f2f2;
  display: flex;
  align-items: center;
  justify-content: space-between;
}
.navbar button {
  gap: 2px;
}

.timeline {
  height: 41px;
  display: flex;
  background: #f1f1f1;
  border-top: 2px solid #d0d0d0;
}
.playback {
  display: flex;
  align-items: center;
  gap: 7px;
  padding: 2px 16px 0 7px;
}
.track {
  position: relative;
  width: 463px;
  margin-top: 6px;
}
.bars {
  display: grid;
  grid-template-columns: repeat(23, 1fr);
  height: 5px;
}
.bars span {
  margin-right: 3px;
}
.yellow { background: #f9d57e; }
.orange { background: #f4976a; }
.blue { background: #5380de; }
.s13 { grid-column: span 13; }
.s1 { grid-column: span 1; }
.s6 { grid-column: span 6; }
.s2 { grid-column: span 2; }
.features,
.ticks {
  display: grid;
  grid-template-columns: repeat(23, 1fr);
}
.features {
  padding-top: 1px;
}
.features button {
  height: 16px;
  padding-right: 3px;
}
.ticks {
  margin: 1px 9px 0 3px;
  border-bottom: 2px solid #c9c9c9;
}
.ticks span {
  height: 4px;
  margin-left: 6px;
  border-left: 1px solid #c0c0c0;
}
.marker {
  position: absolute;
  right: -4px;
  top: 2px;
  width: 10px;
  height: 27px;
}
.settings {
  margin-left: auto;
  margin-right: 11px;
}
</style>
